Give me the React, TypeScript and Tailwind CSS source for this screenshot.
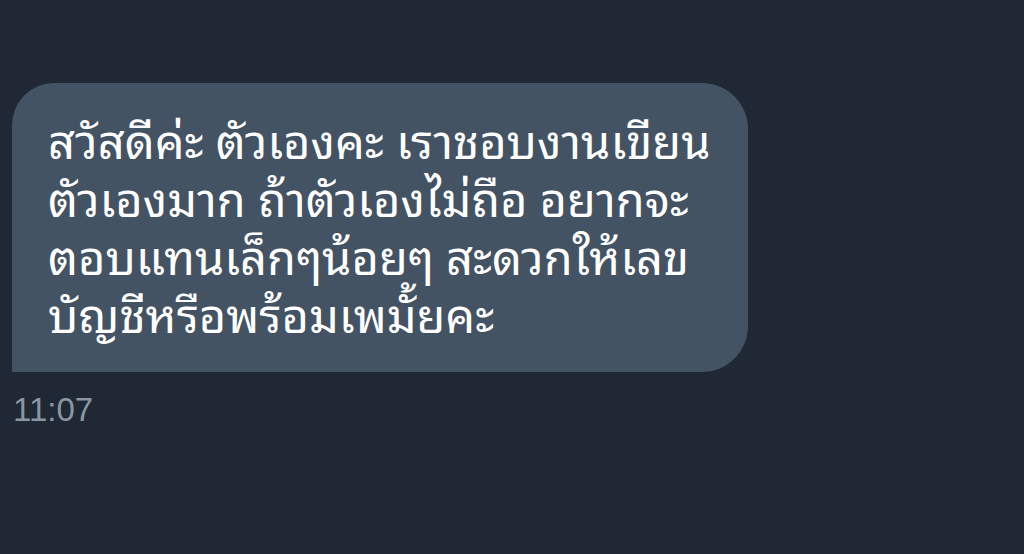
export default function App() {
  const text = [
    "สวัสดีค่ะ ตัวเองคะ เราชอบงานเขียน",
    "ตัวเองมาก ถ้าตัวเองไม่ถือ อยากจะ",
    "ตอบแทนเล็กๆน้อยๆ สะดวกให้เลข",
    "บัญชีหรือพร้อมเพมั้ยคะ",
  ].join("\n");
  return (
    <div className="w-[1024px] h-[554px] bg-[#1f2834] overflow-hidden">
      <div className="pt-[83px] pl-[12px]">
        <div
          className="w-[736px] h-[289px] bg-[#435364] rounded-tl-[42px] rounded-tr-[46px] rounded-br-[46px] rounded-bl-none pl-[36px] pt-[26px] text-white text-[47px] leading-[58px]"
          style={{ fontFamily: '"Noto Sans Thai Looped", "Noto Serif Thai", "DejaVu Sans", "Noto Sans", sans-serif' }}
        >
          <p className="whitespace-pre">{text}</p>
        </div>
        <div
          className="mt-[20px] pl-[1px] text-[33px] leading-[36px] text-[#8b96a3]"
          style={{ fontFamily: '"Liberation Sans", Arial, sans-serif' }}
        >
          11:07
        </div>
      </div>
    </div>
  );
}
